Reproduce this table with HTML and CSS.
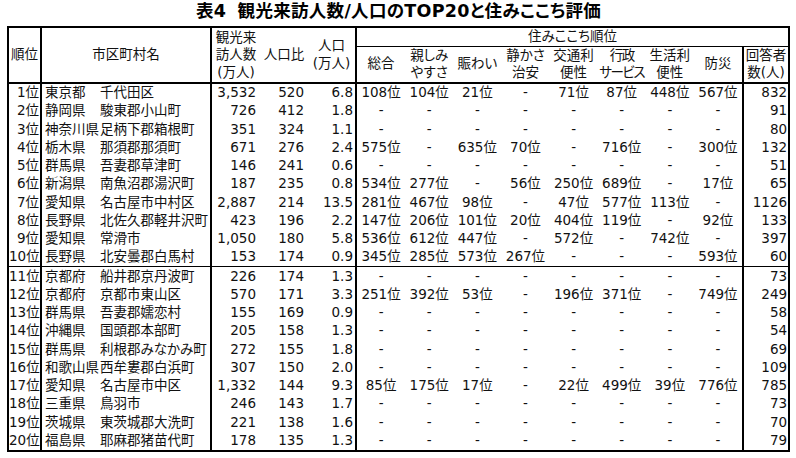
FILE: index.html
```html
<!DOCTYPE html>
<html lang="ja">
<head>
<meta charset="utf-8">
<link rel="stylesheet" href="styles.css">
</head>
<body>
<div class="page">
  <div class="title">表4 観光来訪人数/人口のTOP20と住みここち評価</div>
  <table class="t">
    <colgroup>
      <col class="c-rank"><col class="c-name"><col class="c-num"><col class="c-num"><col class="c-pop">
      <col class="c-r"><col class="c-r"><col class="c-r"><col class="c-r"><col class="c-r"><col class="c-r"><col class="c-r"><col class="c-r">
      <col class="c-ans">
    </colgroup>
    <thead>
      <tr class="h1">
        <th rowspan="2" class="hb br">順位</th>
        <th rowspan="2" class="hb br">市区町村名</th>
        <th rowspan="2" class="hb">観光来<br>訪人数<br>(万人)</th>
        <th rowspan="2" class="hb">人口比</th>
        <th rowspan="2" class="hb br">人口<br>(万人)</th>
        <th colspan="9" class="hsub">住みここち順位</th>
      </tr>
      <tr class="h2">
        <th class="hb">総合</th>
        <th class="hb">親しみ<br>やすさ</th>
        <th class="hb">賑わい</th>
        <th class="hb">静かさ<br>治安</th>
        <th class="hb">交通利<br>便性</th>
        <th class="hb tight">行政<br>サービス</th>
        <th class="hb">生活利<br>便性</th>
        <th class="hb">防災</th>
        <th class="hb bl">回答者<br>数(人)</th>
      </tr>
    </thead>
    <tbody>
      <tr class="row"><td>1位</td><td><span class="pref">東京都</span>千代田区</td><td>3,532</td><td>520</td><td>6.8</td><td>108位</td><td>104位</td><td>21位</td><td>-</td><td>71位</td><td>87位</td><td>448位</td><td>567位</td><td>832</td></tr>
      <tr class="row"><td>2位</td><td><span class="pref">静岡県</span>駿東郡小山町</td><td>726</td><td>412</td><td>1.8</td><td>-</td><td>-</td><td>-</td><td>-</td><td>-</td><td>-</td><td>-</td><td>-</td><td>91</td></tr>
      <tr class="row"><td>3位</td><td><span class="pref">神奈川県</span>足柄下郡箱根町</td><td>351</td><td>324</td><td>1.1</td><td>-</td><td>-</td><td>-</td><td>-</td><td>-</td><td>-</td><td>-</td><td>-</td><td>80</td></tr>
      <tr class="row"><td>4位</td><td><span class="pref">栃木県</span>那須郡那須町</td><td>671</td><td>276</td><td>2.4</td><td>575位</td><td>-</td><td>635位</td><td>70位</td><td>-</td><td>716位</td><td>-</td><td>300位</td><td>132</td></tr>
      <tr class="row"><td>5位</td><td><span class="pref">群馬県</span>吾妻郡草津町</td><td>146</td><td>241</td><td>0.6</td><td>-</td><td>-</td><td>-</td><td>-</td><td>-</td><td>-</td><td>-</td><td>-</td><td>51</td></tr>
      <tr class="row"><td>6位</td><td><span class="pref">新潟県</span>南魚沼郡湯沢町</td><td>187</td><td>235</td><td>0.8</td><td>534位</td><td>277位</td><td>-</td><td>56位</td><td>250位</td><td>689位</td><td>-</td><td>17位</td><td>65</td></tr>
      <tr class="row"><td>7位</td><td><span class="pref">愛知県</span>名古屋市中村区</td><td>2,887</td><td>214</td><td>13.5</td><td>281位</td><td>467位</td><td>98位</td><td>-</td><td>47位</td><td>577位</td><td>113位</td><td>-</td><td>1126</td></tr>
      <tr class="row"><td>8位</td><td><span class="pref">長野県</span>北佐久郡軽井沢町</td><td>423</td><td>196</td><td>2.2</td><td>147位</td><td>206位</td><td>101位</td><td>20位</td><td>404位</td><td>119位</td><td>-</td><td>92位</td><td>133</td></tr>
      <tr class="row"><td>9位</td><td><span class="pref">愛知県</span>常滑市</td><td>1,050</td><td>180</td><td>5.8</td><td>536位</td><td>612位</td><td>447位</td><td>-</td><td>572位</td><td>-</td><td>742位</td><td>-</td><td>397</td></tr>
      <tr class="row sep"><td>10位</td><td><span class="pref">長野県</span>北安曇郡白馬村</td><td>153</td><td>174</td><td>0.9</td><td>345位</td><td>285位</td><td>573位</td><td>267位</td><td>-</td><td>-</td><td>-</td><td>593位</td><td>60</td></tr>
      <tr class="row"><td>11位</td><td><span class="pref">京都府</span>船井郡京丹波町</td><td>226</td><td>174</td><td>1.3</td><td>-</td><td>-</td><td>-</td><td>-</td><td>-</td><td>-</td><td>-</td><td>-</td><td>73</td></tr>
      <tr class="row"><td>12位</td><td><span class="pref">京都府</span>京都市東山区</td><td>570</td><td>171</td><td>3.3</td><td>251位</td><td>392位</td><td>53位</td><td>-</td><td>196位</td><td>371位</td><td>-</td><td>749位</td><td>249</td></tr>
      <tr class="row"><td>13位</td><td><span class="pref">群馬県</span>吾妻郡嬬恋村</td><td>155</td><td>169</td><td>0.9</td><td>-</td><td>-</td><td>-</td><td>-</td><td>-</td><td>-</td><td>-</td><td>-</td><td>58</td></tr>
      <tr class="row"><td>14位</td><td><span class="pref">沖縄県</span>国頭郡本部町</td><td>205</td><td>158</td><td>1.3</td><td>-</td><td>-</td><td>-</td><td>-</td><td>-</td><td>-</td><td>-</td><td>-</td><td>54</td></tr>
      <tr class="row"><td>15位</td><td><span class="pref">群馬県</span>利根郡みなかみ町</td><td>272</td><td>155</td><td>1.8</td><td>-</td><td>-</td><td>-</td><td>-</td><td>-</td><td>-</td><td>-</td><td>-</td><td>69</td></tr>
      <tr class="row"><td>16位</td><td><span class="pref">和歌山県</span>西牟婁郡白浜町</td><td>307</td><td>150</td><td>2.0</td><td>-</td><td>-</td><td>-</td><td>-</td><td>-</td><td>-</td><td>-</td><td>-</td><td>109</td></tr>
      <tr class="row"><td>17位</td><td><span class="pref">愛知県</span>名古屋市中区</td><td>1,332</td><td>144</td><td>9.3</td><td>85位</td><td>175位</td><td>17位</td><td>-</td><td>22位</td><td>499位</td><td>39位</td><td>776位</td><td>785</td></tr>
      <tr class="row"><td>18位</td><td><span class="pref">三重県</span>鳥羽市</td><td>246</td><td>143</td><td>1.7</td><td>-</td><td>-</td><td>-</td><td>-</td><td>-</td><td>-</td><td>-</td><td>-</td><td>73</td></tr>
      <tr class="row"><td>19位</td><td><span class="pref">茨城県</span>東茨城郡大洗町</td><td>221</td><td>138</td><td>1.6</td><td>-</td><td>-</td><td>-</td><td>-</td><td>-</td><td>-</td><td>-</td><td>-</td><td>70</td></tr>
      <tr class="row"><td>20位</td><td><span class="pref">福島県</span>耶麻郡猪苗代町</td><td>178</td><td>135</td><td>1.3</td><td>-</td><td>-</td><td>-</td><td>-</td><td>-</td><td>-</td><td>-</td><td>-</td><td>79</td></tr>
    </tbody>
  </table>
</div>
</body>
</html>
```

FILE: styles.css
```css
html, body {
  margin: 0;
  padding: 0;
  background: #ffffff;
}

.page {
  padding-left: 7px;
  width: 783px;
  font-family: "DejaVu Sans", "Noto Sans CJK JP", sans-serif;
  font-feature-settings: "palt";
  color: #111111;
}

.title {
  height: 26px;
  line-height: 23px;
  text-align: center;
  font-size: 17.5px;
  font-weight: bold;
  color: #000000;
  word-spacing: 5px;
  letter-spacing: 0.3px;
}

.t {
  box-sizing: border-box;
  width: 783px;
  table-layout: fixed;
  border-collapse: separate;
  border-spacing: 0;
  border: 2px solid #000000;
  font-size: 13.5px;
}

.c-rank { width: 33px; }
.c-name { width: 170px; }
.c-num { width: 48px; }
.c-pop { width: 49px; }
.c-r { width: 48.125px; }
.c-ans { width: 46px; }

.t th,
.t td {
  box-sizing: border-box;
  padding: 0;
  font-weight: normal;
  white-space: nowrap;
}

.t td {
  overflow: hidden;
}

.t th {
  line-height: 17.5px;
  text-align: center;
  vertical-align: middle;
}

.tight {
  letter-spacing: -1.5px;
}

.h1 { height: 17px; }
.h2 { height: 37px; }

.hb { border-bottom: 2px solid #000000; }
.br { border-right: 2px solid #000000; }
.bl { border-left: 2px solid #000000; }
.hsub { border-bottom: 1px solid #000000; }

.row { height: 18.25px; }
.row td {
  line-height: 17px;
  vertical-align: middle;
  text-align: center;
}

.row td:nth-child(1) {
  text-align: right;
  padding-right: 1px;
  border-right: 2px solid #000000;
}
.row td:nth-child(2) {
  text-align: left;
  padding-left: 3px;
  border-right: 2px solid #000000;
}
.row td:nth-child(3),
.row td:nth-child(4) {
  text-align: right;
  padding-right: 4px;
}
.row td:nth-child(5) {
  text-align: right;
  padding-right: 2px;
  border-right: 2px solid #000000;
}
.row td:nth-child(14) {
  text-align: right;
  padding-right: 1px;
  border-left: 2px solid #000000;
}

.sep { height: 19.25px; }
.sep td { border-bottom: 1px solid #000000; }

.pref {
  display: inline-block;
  width: 55px;
}
```
